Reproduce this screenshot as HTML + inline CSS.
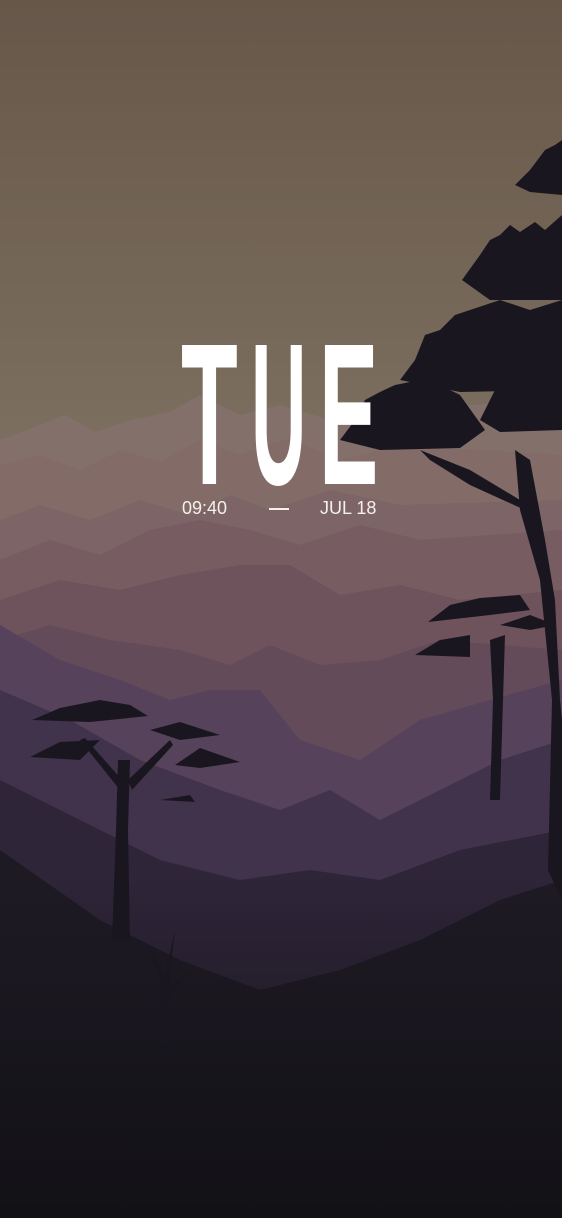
<!DOCTYPE html>
<html><head><meta charset="utf-8"><style>
html,body{margin:0;padding:0;width:562px;height:1218px;overflow:hidden;background:#121116}
svg{position:absolute;left:0;top:0}
.l{position:absolute;top:313px;font:700 202px/1 "Liberation Sans",sans-serif;color:#fff;transform-origin:0 0}
.sub{position:absolute;top:499px;font:400 18px/1 "Liberation Sans",sans-serif;color:#f4f0ec}
</style></head><body>
<svg width="562" height="1218" viewBox="0 0 562 1218">
<defs>
<linearGradient id="sky" x1="0" y1="0" x2="0" y2="1">
<stop offset="0" stop-color="#67574a"/><stop offset="0.35" stop-color="#7b6e5e"/><stop offset="0.5" stop-color="#7e7260"/><stop offset="1" stop-color="#7e7260"/></linearGradient>
<linearGradient id="fog" x1="0" y1="0" x2="0" y2="1">
<stop offset="0" stop-color="#121116" stop-opacity="0"/><stop offset="1" stop-color="#121116" stop-opacity="1"/></linearGradient>
</defs>
<rect width="562" height="1218" fill="url(#sky)"/>
<path d="M0 440 L40 425 L65 415 L95 432 L130 420 L170 412 L200 395 L240 415 L280 405 L330 420 L380 410 L562 400 V1218 H0Z" fill="#84706a"/>
<path d="M0 465 L40 455 L80 470 L120 450 L160 462 L200 440 L240 455 L290 438 L340 460 L400 445 L562 455 V1218 H0Z" fill="#836c68"/>
<path d="M0 520 L40 505 L90 520 L140 500 L190 515 L230 495 L270 510 L330 490 L400 505 L562 500 V1218 H0Z" fill="#7d6466"/>
<path d="M0 560 L50 540 L100 555 L150 530 L200 520 L250 530 L300 545 L360 525 L420 540 L562 530 V1218 H0Z" fill="#775c61"/>
<path d="M0 600 L60 580 L120 590 L180 575 L240 565 L290 565 L340 595 L400 585 L460 600 L562 590 V1218 H0Z" fill="#6f535c"/>
<path d="M0 640 L50 625 L110 640 L180 650 L230 665 L270 645 L320 665 L380 660 L440 640 L562 650 V1218 H0Z" fill="#644b5a"/>
<path d="M0 625 L60 660 L120 680 L170 700 L210 690 L260 690 L300 740 L360 760 L420 720 L490 700 L562 680 V1218 H0Z" fill="#56425a"/>
<path d="M0 690 L70 720 L140 760 L220 790 L280 810 L330 790 L380 820 L440 790 L500 760 L562 740 V1218 H0Z" fill="#41334b"/>
<path d="M0 780 L80 820 L160 860 L240 880 L310 870 L380 880 L460 850 L562 830 V1218 H0Z" fill="#2e2538"/>
<path d="M0 850 L100 920 L180 960 L260 990 L340 970 L420 940 L500 900 L562 880 V1218 H0Z" fill="#1e1a24"/>
<rect y="880" width="562" height="338" fill="url(#fog)"/>
<g fill="#1a1620">
<path d="M515 185 L530 170 L545 150 L555 145 L562 140 V195 L530 192Z"/>
<path d="M462 280 L480 255 L490 240 L500 235 L510 225 L520 232 L535 222 L545 230 L562 215 V300 L490 300Z"/>
<path d="M400 380 L415 360 L425 335 L440 330 L455 315 L470 310 L485 305 L500 300 L530 310 L562 300 V390 L460 392Z"/>
<path d="M340 440 L355 420 L365 400 L380 392 L395 385 L410 382 L430 380 L460 395 L485 430 L460 448 L380 450Z"/>
<path d="M480 420 L500 380 L525 370 L562 360 V430 L500 432Z"/>
<path d="M515 450 L530 460 L545 540 L555 600 L560 700 L562 720 V900 L548 870 L552 700 L540 580 L520 510Z"/>
<path d="M420 450 L470 470 L520 500 L525 510 L470 485 L430 460Z"/>
<path d="M415 655 L440 640 L470 635 L470 657Z M428 622 L450 605 L480 598 L520 595 L530 610 L490 615Z M500 625 L530 615 L556 625 L530 630Z"/>
<path d="M490 640 L505 635 L503 700 L500 800 L490 800 L493 700Z"/>
<path d="M32 720 L60 708 L100 700 L130 705 L148 716 L90 722Z M30 757 L60 742 L100 740 L80 760Z M150 730 L180 722 L220 735 L180 740Z M175 765 L200 748 L240 762 L200 768Z M160 800 L190 795 L195 802Z"/>
<path d="M118 760 L130 760 L128 830 L130 940 L112 940 L116 830Z M128 780 L170 740 L173 745 L132 790Z M120 790 L80 740 L85 738 L122 780Z"/>
<path d="M155 1040 L160 980 L150 950 L165 975 L175 930 L168 990 L190 970 L170 1000 L168 1045Z"/>
</g>
</svg>
<div class="l" style="left:181px;transform:scaleX(0.46)">T</div>
<div class="l" style="left:251px;transform:scaleX(0.38)">U</div>
<div class="l" style="left:319px;transform:scaleX(0.44)">E</div>
<div class="sub" style="left:182px">09:40</div>
<div style="position:absolute;left:269px;top:508px;width:20px;height:1.5px;background:#f4f0ec"></div>
<div class="sub" style="left:320px">JUL 18</div>
</body></html>
